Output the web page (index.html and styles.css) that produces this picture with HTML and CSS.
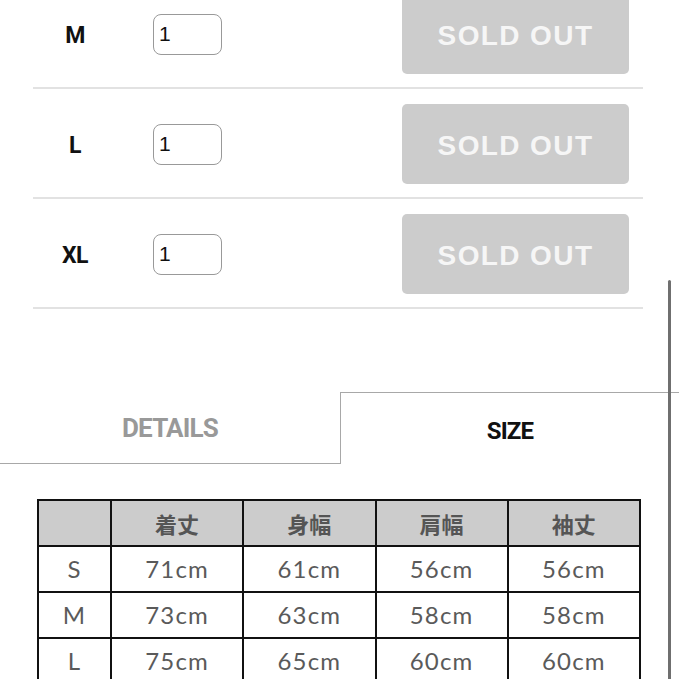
FILE: index.html
```html
<!DOCTYPE html>
<html lang="ja">
<head>
    <meta charset="UTF-8">
    <meta name="viewport" content="width=device-width, initial-scale=1.0">
    <title>Size</title>
    <link rel="stylesheet" href="styles.css">
</head>
<body>
    <div class="page">
        <div class="variants">
            <div class="variant">
                <span class="size-label">M</span>
                <input class="qty" type="text" value="1">
                <button class="sold-out">SOLD OUT</button>
            </div>
            <div class="variant">
                <span class="size-label">L</span>
                <input class="qty" type="text" value="1">
                <button class="sold-out">SOLD OUT</button>
            </div>
            <div class="variant">
                <span class="size-label">XL</span>
                <input class="qty" type="text" value="1">
                <button class="sold-out">SOLD OUT</button>
            </div>
        </div>

        <div class="tabs">
            <div class="tab">DETAILS</div>
            <div class="tab active">SIZE</div>
        </div>

        <table class="size-table">
            <thead>
                <tr>
                    <th></th>
                    <th>着丈</th>
                    <th>身幅</th>
                    <th>肩幅</th>
                    <th>袖丈</th>
                </tr>
            </thead>
            <tbody>
                <tr><td>S</td><td>71cm</td><td>61cm</td><td>56cm</td><td>56cm</td></tr>
                <tr><td>M</td><td>73cm</td><td>63cm</td><td>58cm</td><td>58cm</td></tr>
                <tr><td>L</td><td>75cm</td><td>65cm</td><td>60cm</td><td>60cm</td></tr>
            </tbody>
        </table>

        <div class="scrollbar"></div>
    </div>
</body>
</html>
```

FILE: styles.css
```css
body {
    margin: 0;
    padding: 0;
    background-color: #fff;
    overflow: hidden;
    font-family: "Liberation Sans", Arial, sans-serif;
}
.page {
    position: relative;
    width: 679px;
    height: 679px;
    overflow: hidden;
}
.variants {
    margin-top: -21px;
    margin-left: 33px;
    width: 610px;
}
.variant {
    display: flex;
    align-items: center;
    height: 110px;
    padding-top: 2px;
    box-sizing: border-box;
    border-bottom: 2px solid #e2e2e2;
}
.size-label {
    width: 84px;
    text-align: center;
    font-family: Roboto, "Liberation Sans", sans-serif;
    font-weight: bold;
    font-size: 23px;
    letter-spacing: -0.5px;
    color: #111;
    padding-top: 3px;
}
.qty {
    margin-left: 36px;
    width: 69px;
    height: 41px;
    box-sizing: border-box;
    border: 1.5px solid #999;
    border-radius: 8px;
    padding: 0 0 0 5px;
    font-family: "Liberation Sans", Arial, sans-serif;
    font-size: 21px;
    color: #111;
    background: #fff;
}
.sold-out {
    margin-left: auto;
    margin-right: 14px;
    width: 227px;
    height: 80px;
    border: none;
    border-radius: 5px;
    background-color: #cccccc;
    color: #f6f6f6;
    font-family: "Liberation Sans", Arial, sans-serif;
    font-weight: bold;
    font-size: 28px;
    letter-spacing: 1.4px;
    padding: 3px 0 0;
}

.tabs {
    display: flex;
    margin-top: 83px;
}
.tab {
    width: 340px;
    height: 72px;
    box-sizing: border-box;
    display: flex;
    justify-content: center;
    align-items: center;
    font-family: Roboto, "Liberation Sans", sans-serif;
    font-weight: bold;
    font-size: 26px;
    letter-spacing: -0.8px;
    color: #999;
    border-bottom: 1.5px solid #a8a8a8;
}
.tab.active {
    width: 339px;
    color: #111;
    font-size: 24px;
    border-bottom: none;
    border-top: 1.5px solid #a8a8a8;
    border-left: 1.5px solid #a8a8a8;
    padding-top: 4px;
}

.size-table {
    margin: 35px 0 0 37px;
    width: 604px;
    border-collapse: collapse;
    table-layout: fixed;
}
.size-table th,
.size-table td {
    border: 2px solid #111;
    height: 46px;
    box-sizing: border-box;
    padding: 0;
    text-align: center;
    color: #555;
}
.size-table th {
    background-color: #cccccc;
    font-family: "Noto Sans CJK JP", sans-serif;
    font-weight: bold;
    font-size: 22px;
    line-height: 1;
}
.size-table th:first-child { width: 73px; }
.size-table td {
    font-family: Lato, "Noto Sans CJK JP", sans-serif;
    font-weight: 400;
    font-size: 24px;
    line-height: 1;
    letter-spacing: 1.2px;
    color: #5a5a5a;
}

.scrollbar {
    position: absolute;
    left: 668px;
    top: 280px;
    width: 3px;
    height: 420px;
    border-radius: 2px;
    background-color: #6f6f6f;
}
```
